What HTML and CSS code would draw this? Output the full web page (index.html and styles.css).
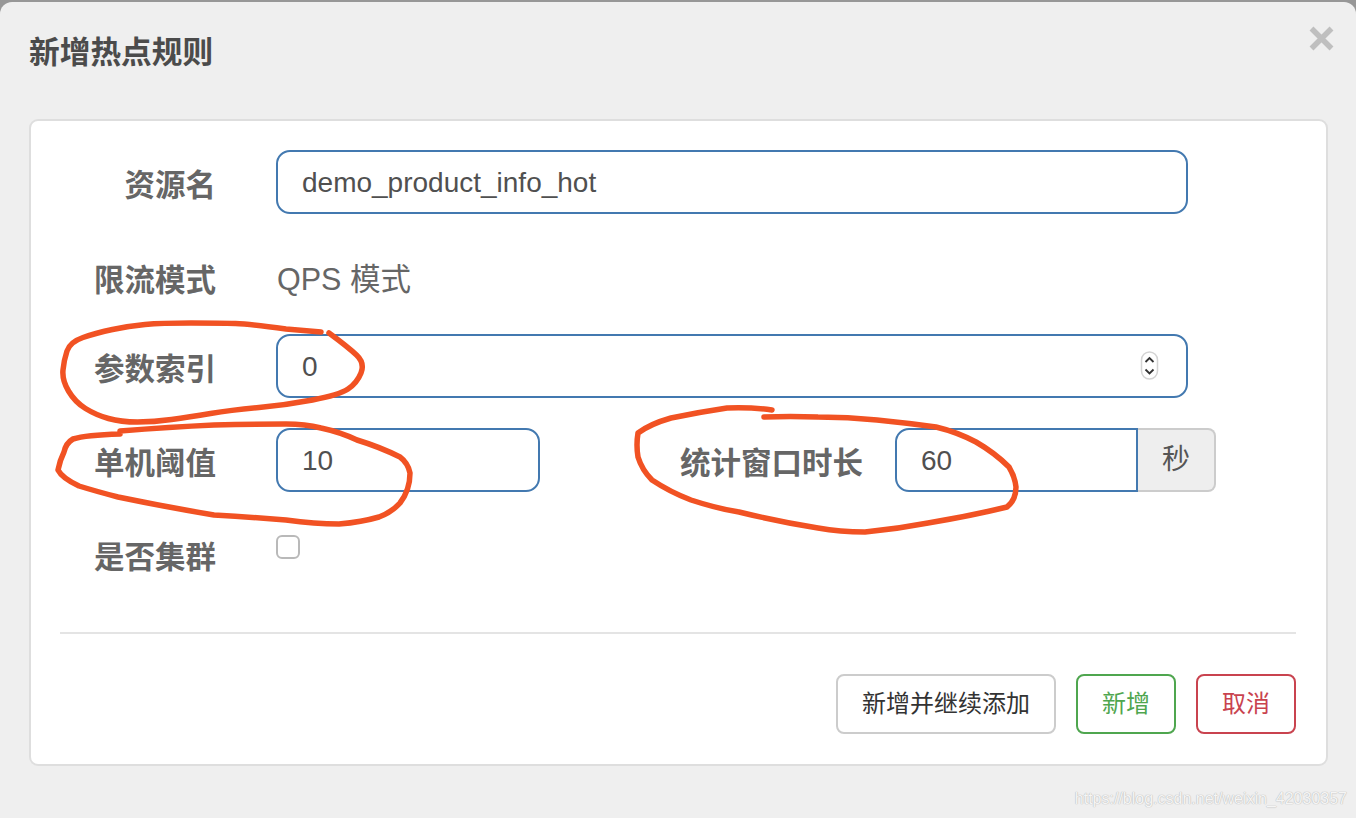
FILE: index.html
```html
<!DOCTYPE html>
<html lang="zh-CN">
<head>
<meta charset="utf-8">
<title>新增热点规则</title>
<link rel="stylesheet" href="styles.css">
</head>
<body>
<div class="dialog">
  <header class="head">
    <h1 class="title">新增热点规则</h1>
    <svg class="close" width="27" height="27" viewBox="0 0 27 27" aria-label="关闭"><path d="M3.500 3.500L23.500 23.500M23.500 3.500L3.500 23.500"/></svg>
  </header>
  <main class="panel">
    <form class="rows">
      <div class="row">
        <label class="label">资源名</label>
        <input class="field field-full" type="text" value="demo_product_info_hot" readonly>
      </div>
      <div class="row row-static">
        <label class="label">限流模式</label>
        <span class="static">QPS 模式</span>
      </div>
      <div class="row">
        <label class="label">参数索引</label>
        <div class="spin-wrap">
          <input class="field field-full" type="text" value="0" readonly>
          <svg class="spin" width="19" height="30" viewBox="0 0 19 30"><rect x="1.500" y="1" width="16" height="27" rx="8" class="spin-bg"/><path d="M5.500 11L9.500 7L13.500 11M5.500 18.500L9.500 22.500L13.500 18.500" class="spin-arrow"/></svg>
        </div>
      </div>
      <div class="row">
        <label class="label">单机阈值</label>
        <input class="field field-short" type="text" value="10" readonly>
        <label class="label label-window">统计窗口时长</label>
        <div class="group">
          <input class="field field-group" type="text" value="60" readonly>
          <span class="addon">秒</span>
        </div>
      </div>
      <div class="row">
        <label class="label">是否集群</label>
        <input class="check" type="checkbox">
      </div>
    </form>
    <hr class="rule">
    <div class="actions">
      <button class="btn btn-plain" type="button">新增并继续添加</button>
      <button class="btn btn-ok" type="button">新增</button>
      <button class="btn btn-cancel" type="button">取消</button>
    </div>
  </main>
</div>
<svg class="marks" width="1356" height="818" viewBox="0 0 1356 818">
  <path d="M321 332L286 329Q250 324 235.500 323.500Q221 323 191 323Q161 323 145 324.500Q129 326 112.500 329.500Q96 333 83 337.500Q70 342 67 351Q64 360 63 370Q62 380 68.500 391Q75 402 85.500 408.500Q96 415 108.500 418.500Q121 422 137.500 422Q154 422 171.500 419.500Q189 417 210.500 413.500Q232 410 259 407.500Q286 405 312.500 400Q339 395 348 389Q357 383 361 373Q365 363 356.500 355Q348 347 329 333"/>
  <path d="M120 434Q86 435 73 439Q66 443 64 452Q60 460 58 470Q62 478 79 486Q95 491 118 497Q166 507 214 515Q250 517 286 520Q315 524 339 524Q362 522 379 517Q392 512 400 503Q410 490 410 473Q408 463 400 457Q380 447 357 440Q340 432 321 428Q305 424 286 424Q250 424 214 425Q170 427 120 431"/>
  <path d="M772 410Q750 407 727 408Q700 412 671 418Q650 424 638 433Q636 445 638 457Q642 470 652 480Q670 492 691 500Q715 508 739 512Q780 522 818 528Q840 532 865 532Q897 529 928 523Q970 516 1007 507Q1016 500 1016 487Q1015 477 1009 467Q995 453 976 442Q957 432 936 427Q907 423 877 420Q848 417 818 417Q790 416 764 417"/>
</svg>
<div class="watermark">https://blog.csdn.net/weixin_42030357</div>
</body>
</html>
```

FILE: styles.css
```css
* { box-sizing: border-box; }
html, body { margin: 0; height: 818px; overflow: hidden; }
body {
  background: #979797;
  padding-top: 2px;
  font-family: "Liberation Sans", "Noto Sans CJK SC", sans-serif;
  position: relative;
}
.dialog {
  height: 816px;
  background: #efefef;
  border-radius: 12px 12px 0 0;
  padding: 0 28px 0 29px;
  display: flex;
  flex-direction: column;
}
.head {
  height: 117px;
  display: flex;
  justify-content: space-between;
  align-items: flex-start;
  margin-right: -7px;
}
.title {
  margin: 29px 0 0;
  font-size: 30.700px;
  line-height: 44px;
  font-weight: 700;
  color: #4b4b4b;
}
.close { margin-top: 23px; }
.close path { stroke: #bfbfbf; stroke-width: 5.500px; fill: none; }
.panel {
  height: 647px;
  background: #fff;
  border: 2px solid #dedede;
  border-radius: 9px;
  padding: 29px 30px 30px 29px;
}
.rows { display: flex; flex-direction: column; gap: 30px; }
.row { display: flex; align-items: flex-start; height: 64px; }
.row-static { height: 60px; }
.label {
  width: 156px;
  height: 64px;
  margin-right: 60px;
  text-align: right;
  font-size: 30.500px;
  line-height: 71px;
  font-weight: 700;
  color: #666;
  flex: none;
}
.row-static .label { height: 60px; line-height: 72px; }
.label-window { width: 323px; margin-right: 32px; }
.static { font-size: 30.500px; line-height: 71px; color: #666; padding-left: 1px; }
.field {
  height: 64px;
  border: 2px solid #4379b0;
  border-radius: 14px;
  padding: 1px 24px 0;
  font: 28px "Liberation Sans", "Noto Sans CJK SC", sans-serif;
  color: #505050;
  background: #fff;
  outline: none;
  display: block;
}
.field-full { width: 912px; }
.field-short { width: 264px; }
.spin-wrap { position: relative; }
.spin { position: absolute; right: 29px; top: 17px; }
.spin-bg { fill: #fff; stroke: #d4d4d4; stroke-width: 1.500; }
.spin-arrow { fill: none; stroke: #333; stroke-width: 1.800; }
.group { display: flex; }
.field-group { width: 243px; border-radius: 14px 0 0 14px; }
.addon {
  width: 78px;
  height: 64px;
  background: #eee;
  border: 2px solid #ccc;
  border-left: 0;
  border-radius: 0 8px 8px 0;
  font-size: 28px;
  line-height: 60px;
  text-align: center;
  color: #555;
}
.check {
  appearance: none;
  width: 24px;
  height: 24px;
  margin: 13px 0 0;
  border: 2px solid #b9b9b9;
  border-radius: 6px;
  background: #fff;
}
.rule { margin: 46px 0 0; height: 2px; border: 0; background: #e4e4e4; }
.actions { display: flex; justify-content: flex-end; gap: 20px; margin-top: 40px; }
.btn {
  height: 60px;
  background: #fff;
  border: 2px solid #ccc;
  border-radius: 8px;
  padding: 0;
  font: 24px/56px "Liberation Sans", "Noto Sans CJK SC", sans-serif;
}
.btn-plain { width: 220px; color: #333; }
.btn-ok { width: 100px; color: #4fa64f; border-color: #4fa64f; }
.btn-cancel { width: 100px; color: #c9434f; border-color: #c9434f; }
.marks { position: absolute; left: 0; top: 0; pointer-events: none; }
.marks path {
  fill: none;
  stroke: #f15223;
  stroke-width: 5.500px;
  stroke-linecap: round;
  stroke-linejoin: round;
}
.watermark {
  position: absolute;
  right: 9px;
  top: 789px;
  font-size: 16px;
  line-height: 20px;
  color: #f5f5f5;
  text-shadow: 0 0 1px #b8b8b8, 0 0 1px #b8b8b8;
}
```
